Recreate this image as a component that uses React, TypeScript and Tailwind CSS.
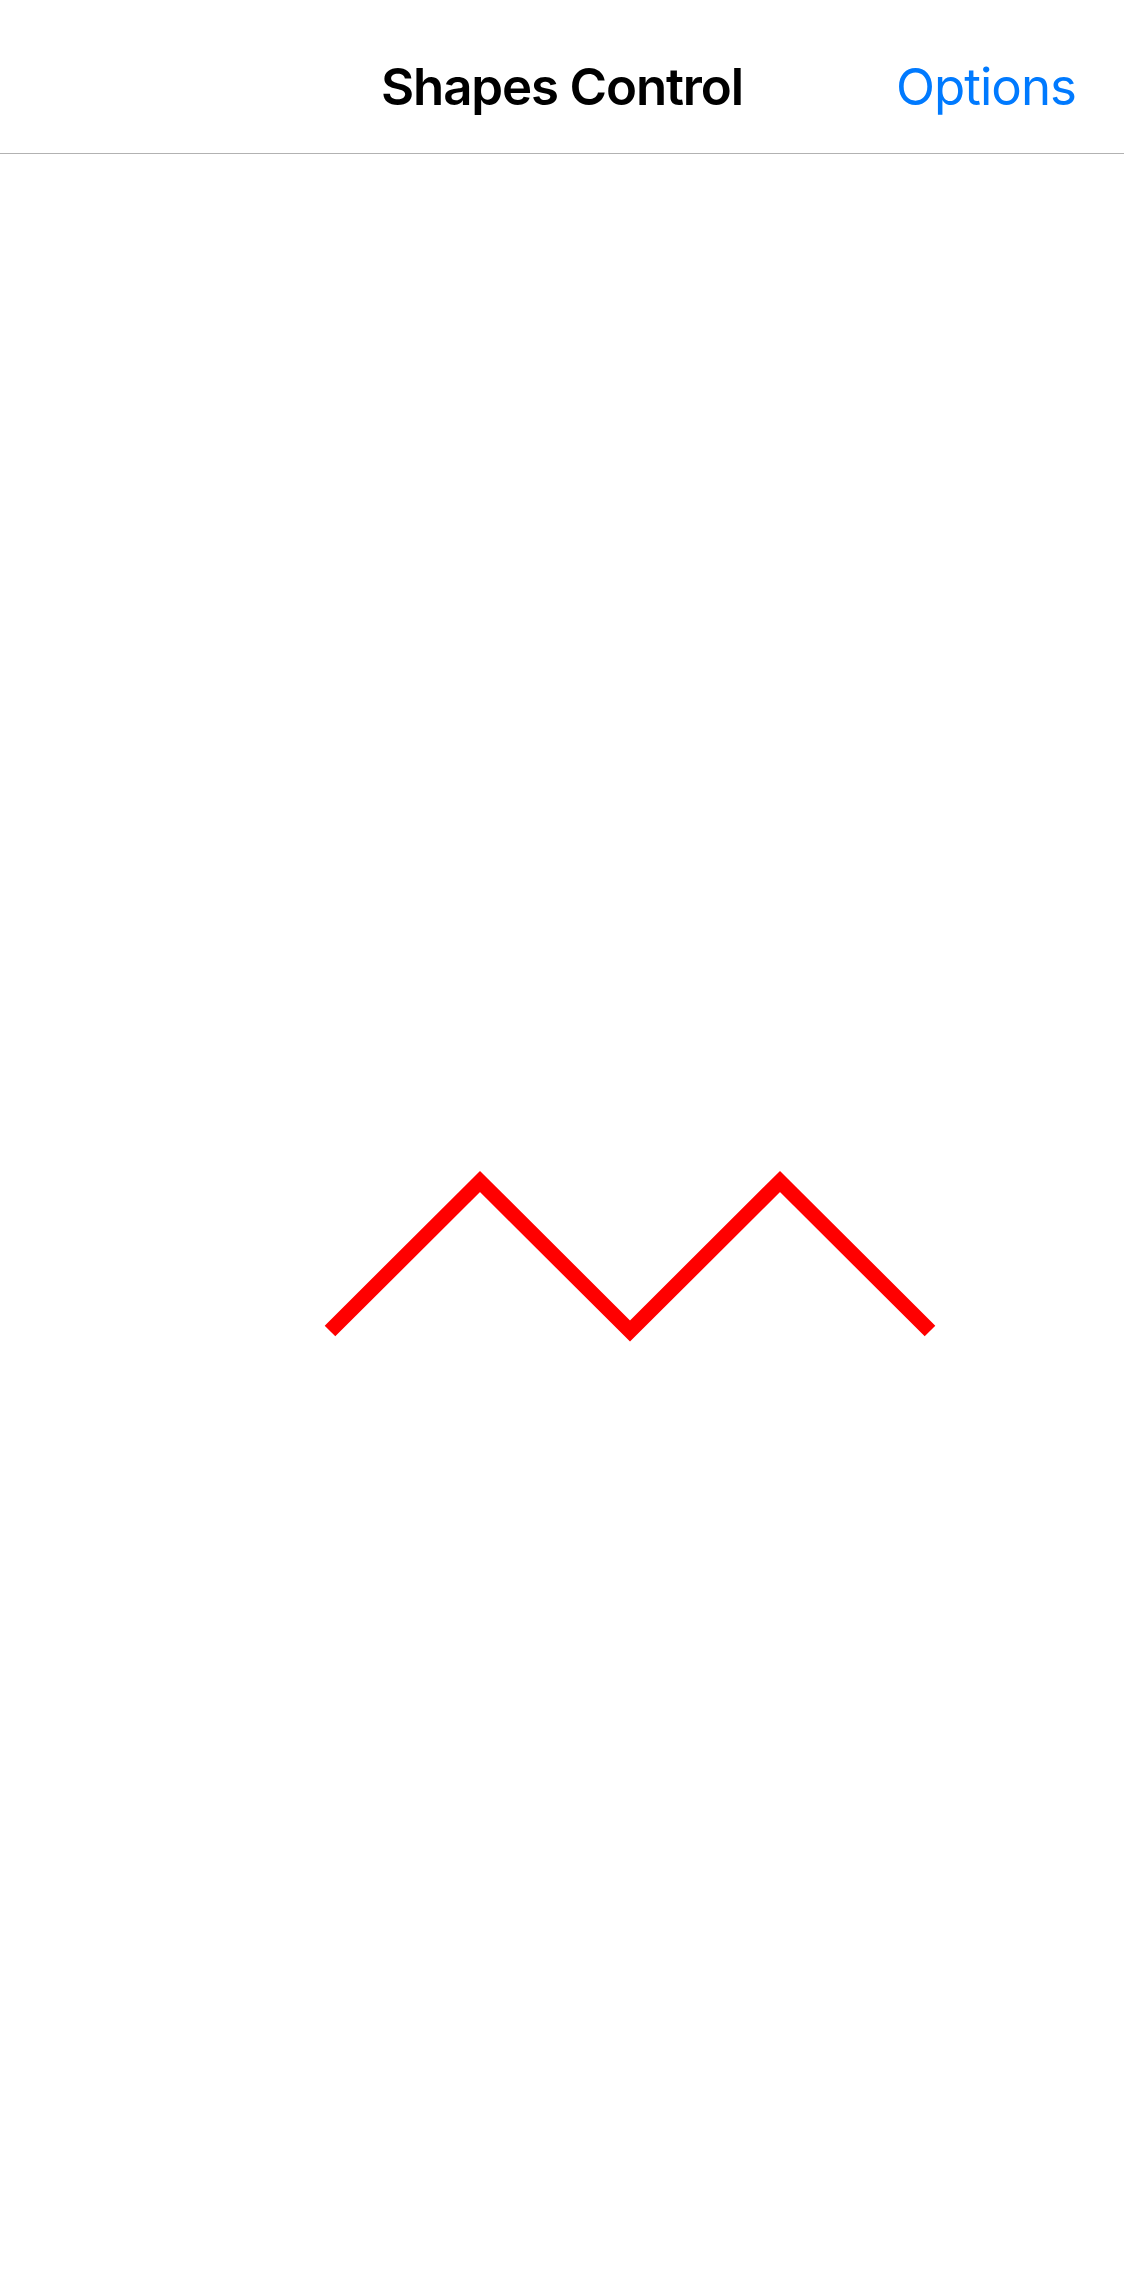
export default function App() {
  return (
    <div className="flex min-h-[2286px] w-full flex-col bg-white font-['Inter',sans-serif]">
      <header className="grid h-[154px] shrink-0 grid-cols-[1fr_auto_1fr] items-center border-b border-[#b2b2b2] pt-[20px]">
        <div />
        <h1 className="text-[51px] font-semibold leading-none tracking-[-1.15px] text-black">Shapes Control</h1>
        <button className="justify-self-end pr-[48px] text-[51px] leading-none tracking-[-1px] text-[#007aff]">Options</button>
      </header>
      <main className="flex-1">
        <svg width="1124" height="2132" viewBox="0 0 1124 2132" className="block">
          <polyline
            points="330,1177 480,1027.5 630,1177 780,1027.5 930,1177"
            fill="none"
            stroke="#ff0000"
            strokeWidth="15"
            strokeLinejoin="miter"
            strokeLinecap="butt"
          />
        </svg>
      </main>
    </div>
  );
}
